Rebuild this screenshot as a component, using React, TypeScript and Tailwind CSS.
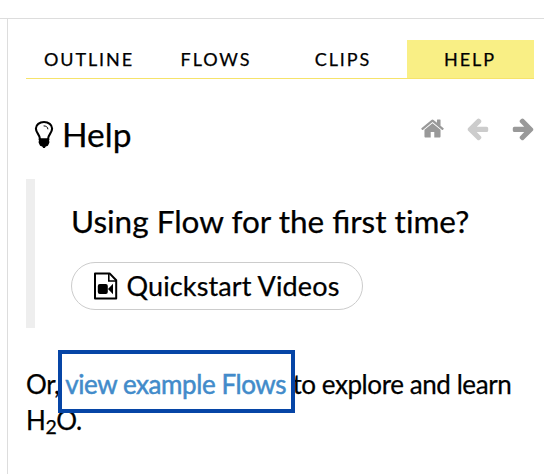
import React from "react";

const tabs = ["OUTLINE", "FLOWS", "CLIPS", "HELP"];

function BulbIcon() {
  return (
    <svg className="mt-[41px] h-7 w-5 shrink-0" viewBox="0 0 20 28" fill="none">
      <path
        d="M5.9 19C5.9 14.2 1.9 13 1.9 8.6C1.9 4.6 5.5 2 10 2S18.1 4.6 18.1 8.6C18.1 13 14.1 14.2 14.1 19"
        stroke="#000"
        strokeWidth="2.1"
      />
      <path d="M10 5.9C12 5.9 13.9 7 13.9 8.9" stroke="#000" strokeWidth="1" strokeLinecap="round" />
      <path
        d="M5.1 18.2H14.9L15.5 19.4L15 20.7L15.5 22L15 23.4L13.9 25.8L11.8 26.6L10.8 28H9.2L8.2 26.6L6.1 25.8L5 23.4L4.5 22L5 20.7L4.5 19.4Z"
        fill="#000"
      />
    </svg>
  );
}

function HomeIcon() {
  return (
    <svg className="h-[25px] w-[25px]" viewBox="0 0 1792 1792" fill="#999">
      <path d="M1472 992v480q0 26-19 45t-45 19h-384v-384h-256v384h-384q-26 0-45-19t-19-45v-480q0-1 .5-3t.5-3l575-474 575 474q1 2 1 6zm223-69l-62 74q-8 9-21 11h-3q-13 0-21-7l-692-577-692 577q-12 8-24 7-13-2-21-11l-62-74q-8-10-7-23.5t11-21.5l719-599q32-26 76-26t76 26l244 204v-195q0-14 9-23t23-9h192q14 0 23 9t9 23v408l219 182q10 8 11 21.5t-7 23.5z" />
    </svg>
  );
}

function BackIcon() {
  return (
    <svg className="h-[25px] w-[25px]" viewBox="0 0 1792 1792" fill="#ccc">
      <path d="M1664 896v128q0 53-32.5 90.5t-84.5 37.5h-704l293 294q38 36 38 90t-38 90l-75 76q-37 37-90 37-52 0-91-37l-651-652q-37-37-37-90 0-52 37-91l651-650q38-38 91-38 52 0 90 38l75 74q38 38 38 91t-38 91l-293 293h704q52 0 84.5 37.5t32.5 90.5z" />
    </svg>
  );
}

function ForwardIcon() {
  return (
    <svg className="h-[25px] w-[25px]" viewBox="0 0 1792 1792" fill="#999">
      <path d="M1600 960q0 54-37 91l-651 651q-39 37-91 37-51 0-90-37l-75-75q-38-38-38-91t38-91l293-293h-704q-52 0-84.5-37.5t-32.5-90.5v-128q0-53 32.5-90.5t84.5-37.5h704l-293-294q-38-36-38-90t38-90l75-75q38-38 90-38 53 0 91 38l651 651q37 35 37 90z" />
    </svg>
  );
}

function VideoFileIcon() {
  return (
    <svg className="h-7 w-6 shrink-0" viewBox="0 0 24 28" fill="none">
      <path d="M1 1.4H15.6L22.2 8.2V26.6H1Z" stroke="#000" strokeWidth="2" strokeLinejoin="round" />
      <path d="M14.8 1.4V9H22.2" stroke="#000" strokeWidth="1.6" />
      <rect x="3.8" y="12" width="10" height="10" rx="2" fill="#000" />
      <path d="M14 17L19 11.8V22.2Z" fill="#000" />
    </svg>
  );
}

export default function App() {
  return (
    <div className="h-[474px] w-[544px] overflow-hidden bg-white pt-[18px] font-['Lato',sans-serif] text-black [-webkit-text-stroke:0.25px_currentColor]">
      <div className="h-full border-t border-[#ddd] pl-[7px]">
        <main className="h-full border-l border-[#ddd] pt-[21px] pr-2.5 pl-[18px]">
          <nav className="flex h-[39px] border-b border-[#f6e36b]">
            {tabs.map((tab) => (
              <button
                key={tab}
                className={
                  tab === "HELP"
                    ? "flex-1 bg-[#f9ef85] pr-px text-[18px] leading-[38px] tracking-[1.9px]"
                    : "flex-1 pr-px text-[18px] leading-[38px] tracking-[1.9px]"
                }
              >
                {tab}
              </button>
            ))}
          </nav>

          <header className="flex h-[100px] pl-2">
            <BulbIcon />
            <h1 className="ml-2 pt-[34px] text-[33.5px] leading-[42px]">Help</h1>
            <div className="mt-[37px] mr-[-1.5px] ml-auto flex gap-[20.5px]">
              <HomeIcon />
              <BackIcon />
              <ForwardIcon />
            </div>
          </header>

          <blockquote className="h-[149px] border-l-9 border-[#eee] pt-[22px] pl-9">
            <h2 className="text-[31.5px] leading-[40px] whitespace-nowrap">
              Using Flow for the first <span className="[font-variant-ligatures:none]">time?</span>
            </h2>
            <button className="mt-[21px] flex h-12 w-[292px] items-center gap-[8.5px] rounded-full border border-[#ccc] pl-[22px] text-[27px] tracking-[0.12px] whitespace-nowrap">
              <VideoFileIcon />
              <span>Quickstart Videos</span>
            </button>
          </blockquote>

          <p className="pt-[37.5px] text-[26px] leading-9 tracking-[-0.42px] whitespace-nowrap">
            Or,{" "}
            <span className="relative text-[#428bca] [-webkit-text-stroke:0.5px_currentColor]">
              view example Flows
              <span className="absolute top-[-17.5px] left-[-7px] h-[63px] w-[237px] border-4 border-[#0645a6]" />
            </span>{" "}
            to explore and learn
            <br />
            H<sub className="bottom-[-0.25em] text-[19.5px]">2</sub>O.
          </p>
        </main>
      </div>
    </div>
  );
}
